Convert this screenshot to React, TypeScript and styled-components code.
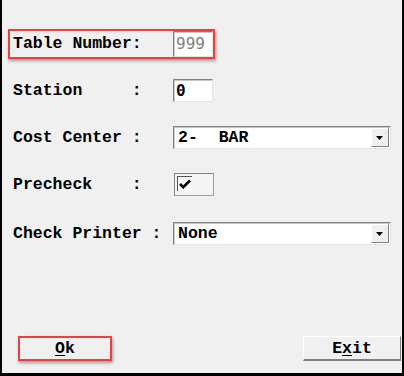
import styled, { createGlobalStyle } from "styled-components";

const GlobalStyle = createGlobalStyle`
  html, body {
    margin: 0;
    padding: 0;
    background: #f0f0f0;
  }
`;

const colors = {
  face: "#f0f0f0",
  shadow: "#808080",
  light: "#ffffff",
  mid: "#a0a0a0",
  annotate: "#ec4040",
};

const labelFont = `"Liberation Mono", "Courier New", monospace`;

const Window = styled.div`
  width: 404px;
  height: 376px;
  box-sizing: border-box;
  background: ${colors.face};
  border-left: 2px solid #000;
  border-right: 2px solid #000;
  border-bottom: 3px solid #000;
  display: flex;
  flex-direction: column;
  font-family: ${labelFont};
`;

const Form = styled.div`
  display: flex;
  flex-direction: column;
  padding: 20px 0 0 11px;
`;

const Row = styled.div<{ $height?: number }>`
  height: ${(p) => p.$height ?? 47}px;
  display: flex;
  align-items: center;
`;

const Highlight = styled.div`
  display: flex;
  align-items: center;
  border: 2px solid ${colors.annotate};
  box-shadow: 1px 2px 3px rgba(0, 0, 0, 0.35);
`;

const FieldHighlight = styled(Highlight)`
  margin-left: -5px;
  padding-left: 3px;
  height: 26px;
`;

const Label = styled.span`
  width: 160px;
  white-space: pre;
  font-weight: bold;
  font-size: 16.5px;
  color: #000;
`;

const Sunken = styled.div`
  box-sizing: border-box;
  background: #fff;
  border: 1px solid;
  border-color: ${colors.shadow} #e4e4e4 #e4e4e4 ${colors.shadow};
  box-shadow: inset 1px 1px 0 #c8c8c8;
  display: flex;
  align-items: center;
`;

const TextField = styled(Sunken)<{ $disabled?: boolean; $height: number }>`
  width: 40px;
  height: ${(p) => p.$height}px;
  padding-left: 2px;
  font-family: "DejaVu Sans Mono", "Liberation Mono", monospace;
  font-size: 16px;
  font-weight: ${(p) => (p.$disabled ? "normal" : "bold")};
  color: ${(p) => (p.$disabled ? colors.shadow : "#000")};
`;

const Select = styled(Sunken)`
  width: 218px;
  height: 23px;
  padding-left: 4px;
  justify-content: space-between;
`;

const SelectValue = styled.span<{ $wide?: boolean }>`
  font-weight: bold;
  font-size: 16.5px;
  white-space: pre;
  word-spacing: ${(p) => (p.$wide ? 11 : 0)}px;
`;

const ArrowButton = styled.div`
  box-sizing: border-box;
  width: 18px;
  height: 19px;
  margin-right: 1px;
  background: ${colors.face};
  border: 1px solid;
  border-color: ${colors.light} ${colors.shadow} ${colors.shadow} ${colors.light};
  display: flex;
  align-items: center;
  justify-content: center;
`;

const CheckFrame = styled.div`
  box-sizing: border-box;
  width: 40px;
  height: 23px;
  margin-left: 1px;
  border: 1px solid;
  border-color: ${colors.shadow} ${colors.mid} ${colors.mid} ${colors.shadow};
  background: #f4f4f4;
  padding: 2px 0 0 2px;
`;

const CheckBox = styled.div`
  box-sizing: border-box;
  width: 15px;
  height: 15px;
  border-top: 1px solid #555;
  border-left: 1px solid #555;
  background: #f7f7f7;
  display: flex;
  align-items: center;
  justify-content: center;
`;

const Footer = styled.div`
  margin-top: auto;
  display: flex;
  justify-content: space-between;
  align-items: flex-end;
  padding: 0 1px 12px 16px;
`;

const Button = styled.div<{ $width: number }>`
  box-sizing: border-box;
  width: ${(p) => p.$width}px;
  height: 25px;
  background: ${colors.face};
  border-top: 1px solid ${colors.light};
  border-left: 1px solid ${colors.light};
  border-right: 1px solid ${colors.shadow};
  border-bottom: 2px solid ${colors.shadow};
  display: flex;
  align-items: center;
  justify-content: center;
  font-weight: bold;
  font-size: 16.5px;
  color: #000;
`;

const OkHighlight = styled(Highlight)`
  width: 94px;
  height: 25px;
  box-sizing: border-box;
  & > ${Button} {
    border: none;
    height: 100%;
  }
`;

const Mnemonic = styled.span`
  text-decoration: underline;
  text-underline-offset: 2px;
`;

const DownArrow = () => (
  <svg width="8" height="4" viewBox="0 0 8 4">
    <path d="M0 0h7L3.5 4z" fill="#000" />
  </svg>
);

const CheckMark = () => (
  <svg width="12" height="10" viewBox="0 0 12 10">
    <path d="M1 5l3.2 3.2L11 1.5" stroke="#000" strokeWidth="2.6" fill="none" />
  </svg>
);

export default function App() {
  return (
    <>
      <GlobalStyle />
      <Window>
        <Form>
          <Row>
            <FieldHighlight>
              <Label>Table Number:</Label>
              <TextField $disabled $height={26}>999</TextField>
            </FieldHighlight>
          </Row>
          <Row>
            <Label>{"Station     :"}</Label>
            <TextField $height={23}>0</TextField>
          </Row>
          <Row>
            <Label>Cost Center :</Label>
            <Select>
              <SelectValue $wide>2- BAR</SelectValue>
              <ArrowButton>
                <DownArrow />
              </ArrowButton>
            </Select>
          </Row>
          <Row>
            <Label>{"Precheck    :"}</Label>
            <CheckFrame>
              <CheckBox>
                <CheckMark />
              </CheckBox>
            </CheckFrame>
          </Row>
          <Row $height={51}>
            <Label>Check Printer :</Label>
            <Select>
              <SelectValue>None</SelectValue>
              <ArrowButton>
                <DownArrow />
              </ArrowButton>
            </Select>
          </Row>
        </Form>
        <Footer>
          <OkHighlight>
            <Button $width={90}>
              <Mnemonic>O</Mnemonic>k
            </Button>
          </OkHighlight>
          <Button $width={98}>
            E<Mnemonic>x</Mnemonic>it
          </Button>
        </Footer>
      </Window>
    </>
  );
}
